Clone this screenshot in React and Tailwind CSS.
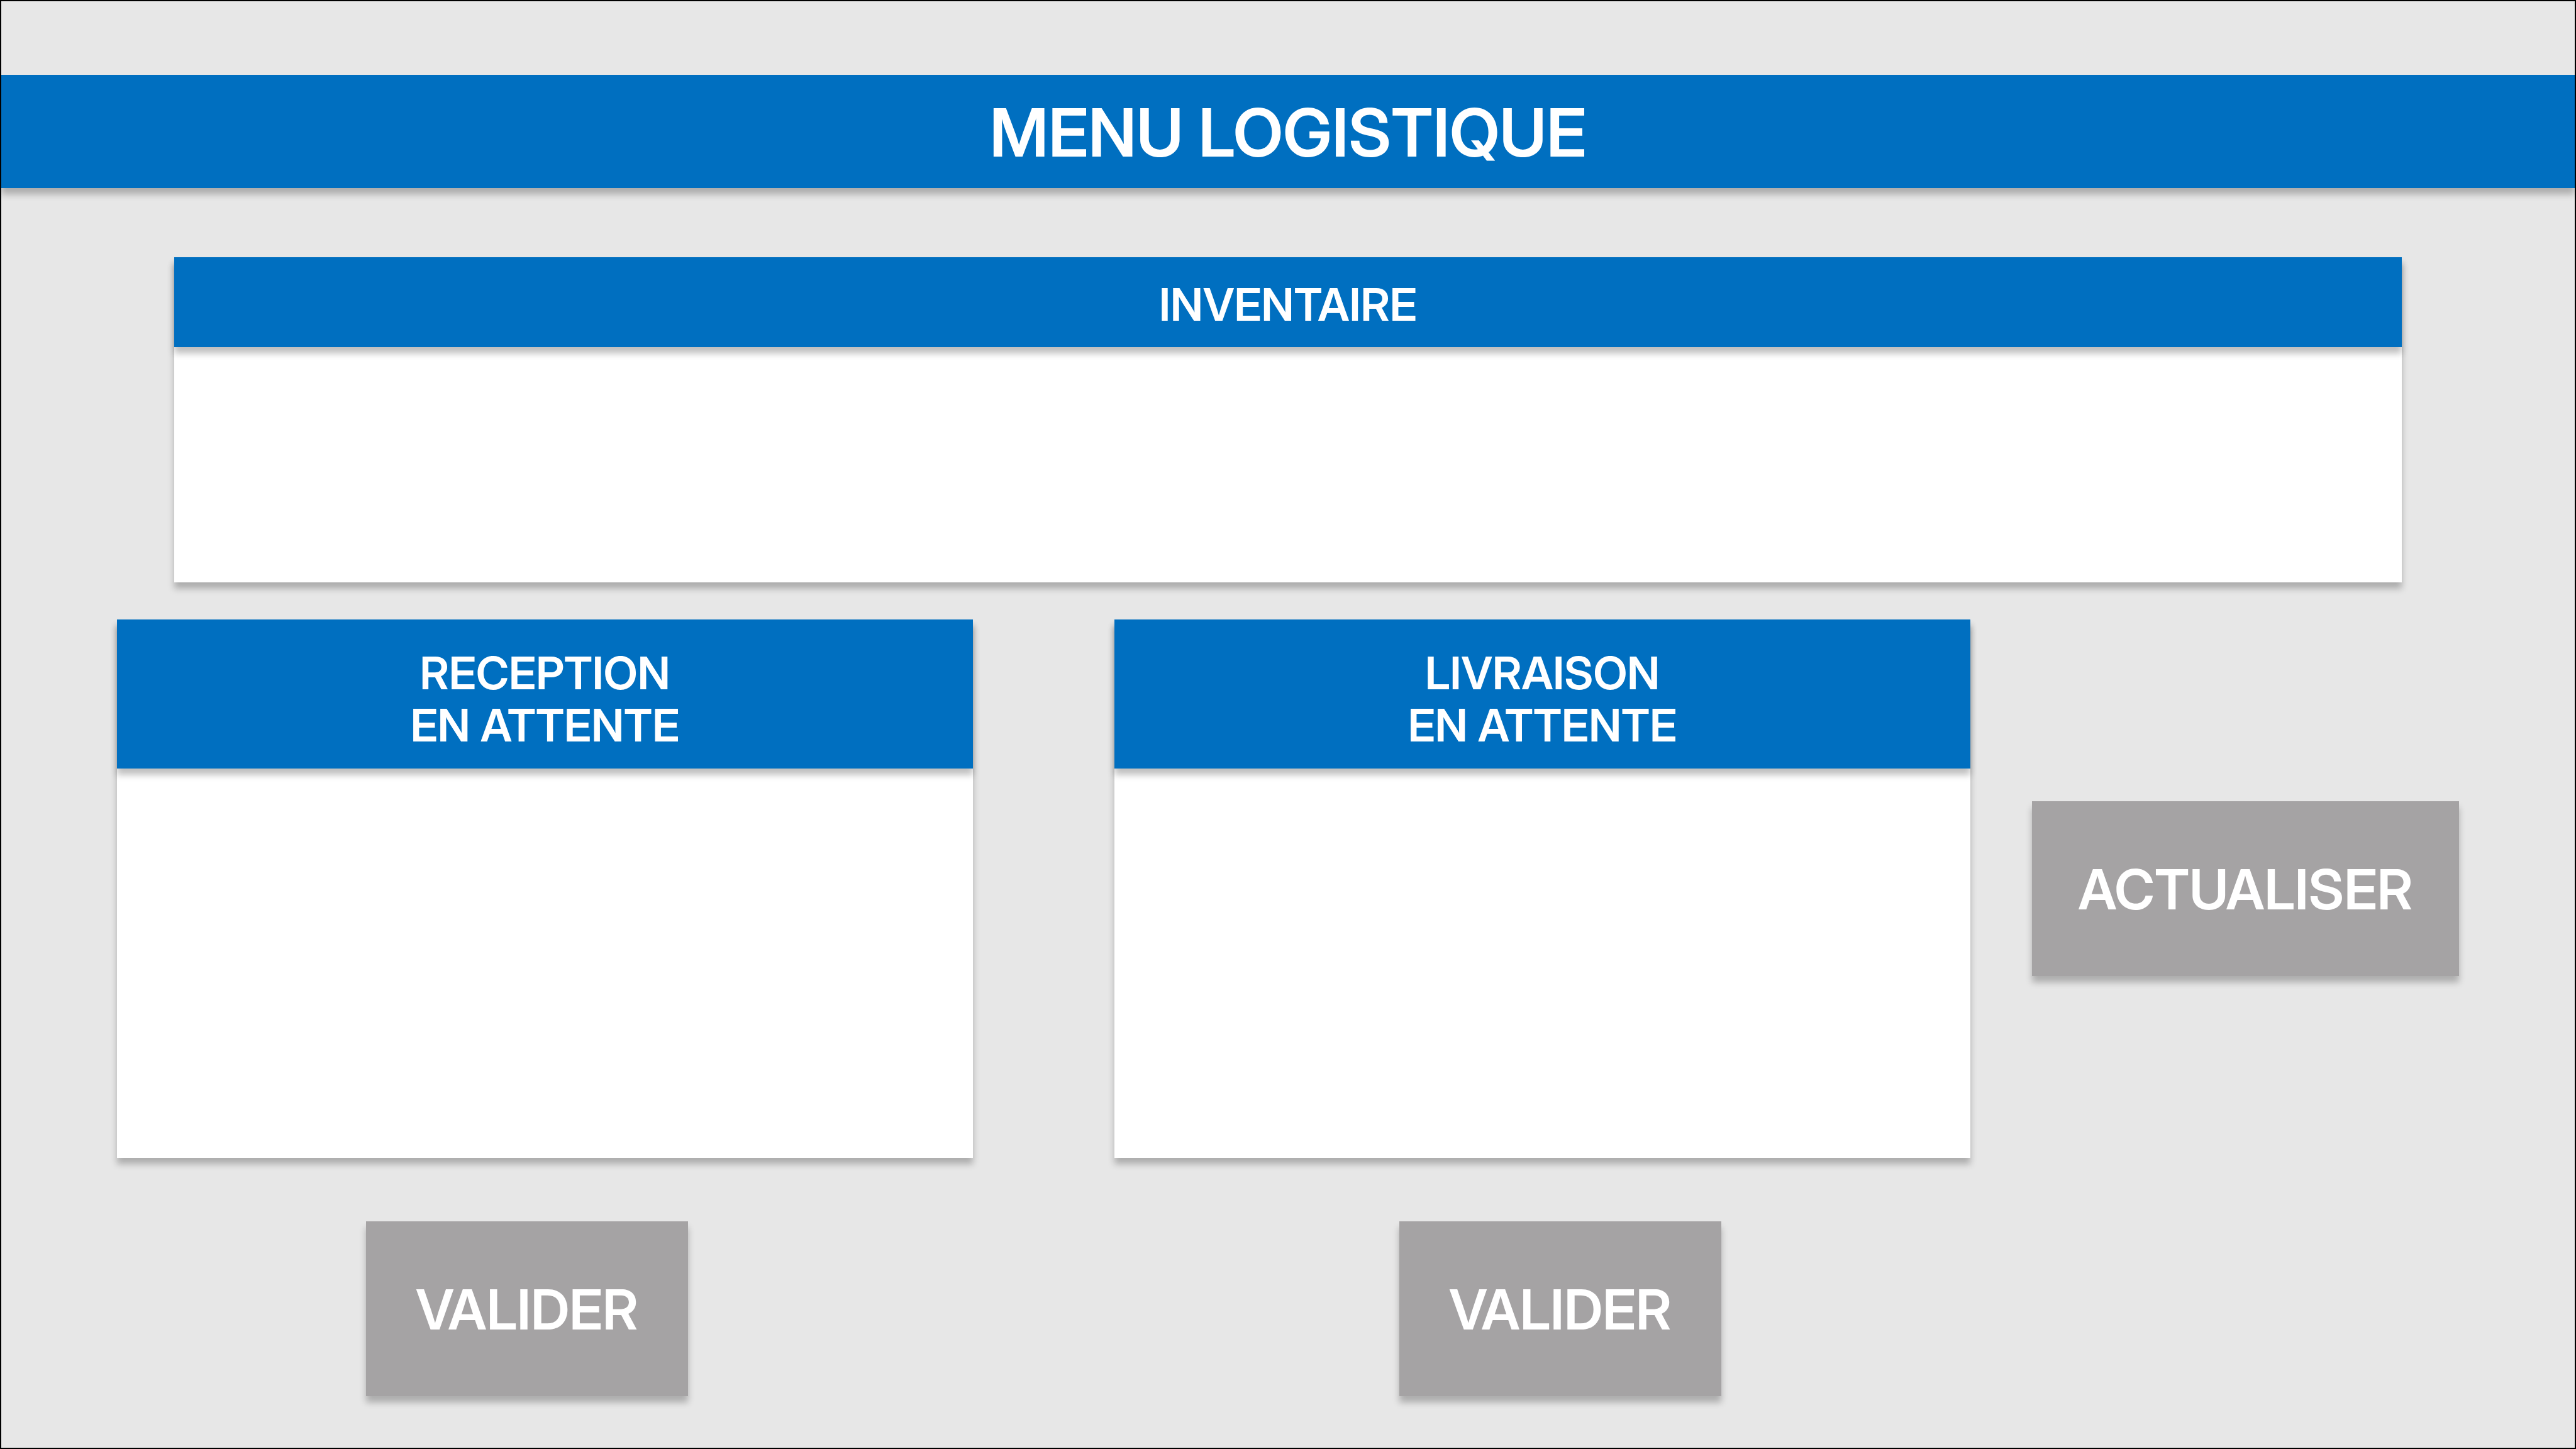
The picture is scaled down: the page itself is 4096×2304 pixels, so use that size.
const SHADOW = "shadow-[0_10px_10px_rgba(0,0,0,0.25)]";

function Panel({ id, title, headingClass, bodyClass, className = "" }) {
  return (
    <section aria-labelledby={id} className={`flex flex-col bg-white ${SHADOW} ${className}`}>
      <h2
        id={id}
        className={`bg-[#006fc0] text-center text-[72px] font-semibold text-white ${SHADOW} ${headingClass}`}
      >
        {title}
      </h2>
      <div className={bodyClass} />
    </section>
  );
}

function ActionButton({ children, className = "" }) {
  return (
    <button
      type="button"
      className={`bg-[#a5a3a4] pt-[94px] pb-[91px] text-center text-[88px] leading-[93px] font-semibold text-white ${SHADOW} ${className}`}
    >
      {children}
    </button>
  );
}

export default function App() {
  return (
    <div className="flex min-h-screen flex-col border-2 border-black bg-[#e7e7e7] pt-[117px] pb-20 font-['Inter_Display','Inter','Liberation_Sans',sans-serif] [font-variation-settings:'opsz'_32]">
      <header className={`bg-[#006fc0] pt-[38px] pb-[34px] text-center ${SHADOW}`}>
        <h1 className="text-[106px] leading-[108px] font-semibold text-white">MENU LOGISTIQUE</h1>
      </header>

      <main className="flex flex-col">
        <Panel
          id="inventaire"
          title="INVENTAIRE"
          headingClass="pt-[37px] pb-[31px] leading-[75px]"
          bodyClass="min-h-[374px]"
          className="mx-[275px] mt-[110px]"
        />

        <div className="mx-[184px] mt-[59px] grid grid-cols-[1fr_679px] gap-x-[98px] gap-y-[101px]">
          <div className="grid grid-cols-2 gap-[225px]">
            <Panel
              id="reception"
              title={<>RECEPTION<br />EN ATTENTE</>}
              headingClass="pt-[43px] pb-7 leading-[83px]"
              bodyClass="min-h-[619px]"
            />
            <Panel
              id="livraison"
              title={<>LIVRAISON<br />EN ATTENTE</>}
              headingClass="pt-[43px] pb-7 leading-[83px]"
              bodyClass="min-h-[619px]"
            />
          </div>
          <ActionButton className="self-center">ACTUALISER</ActionButton>

          <div className="grid grid-cols-2 justify-items-center gap-[339px]">
            <ActionButton className="w-[512px]">VALIDER</ActionButton>
            <ActionButton className="w-[512px]">VALIDER</ActionButton>
          </div>
        </div>
      </main>
    </div>
  );
}
